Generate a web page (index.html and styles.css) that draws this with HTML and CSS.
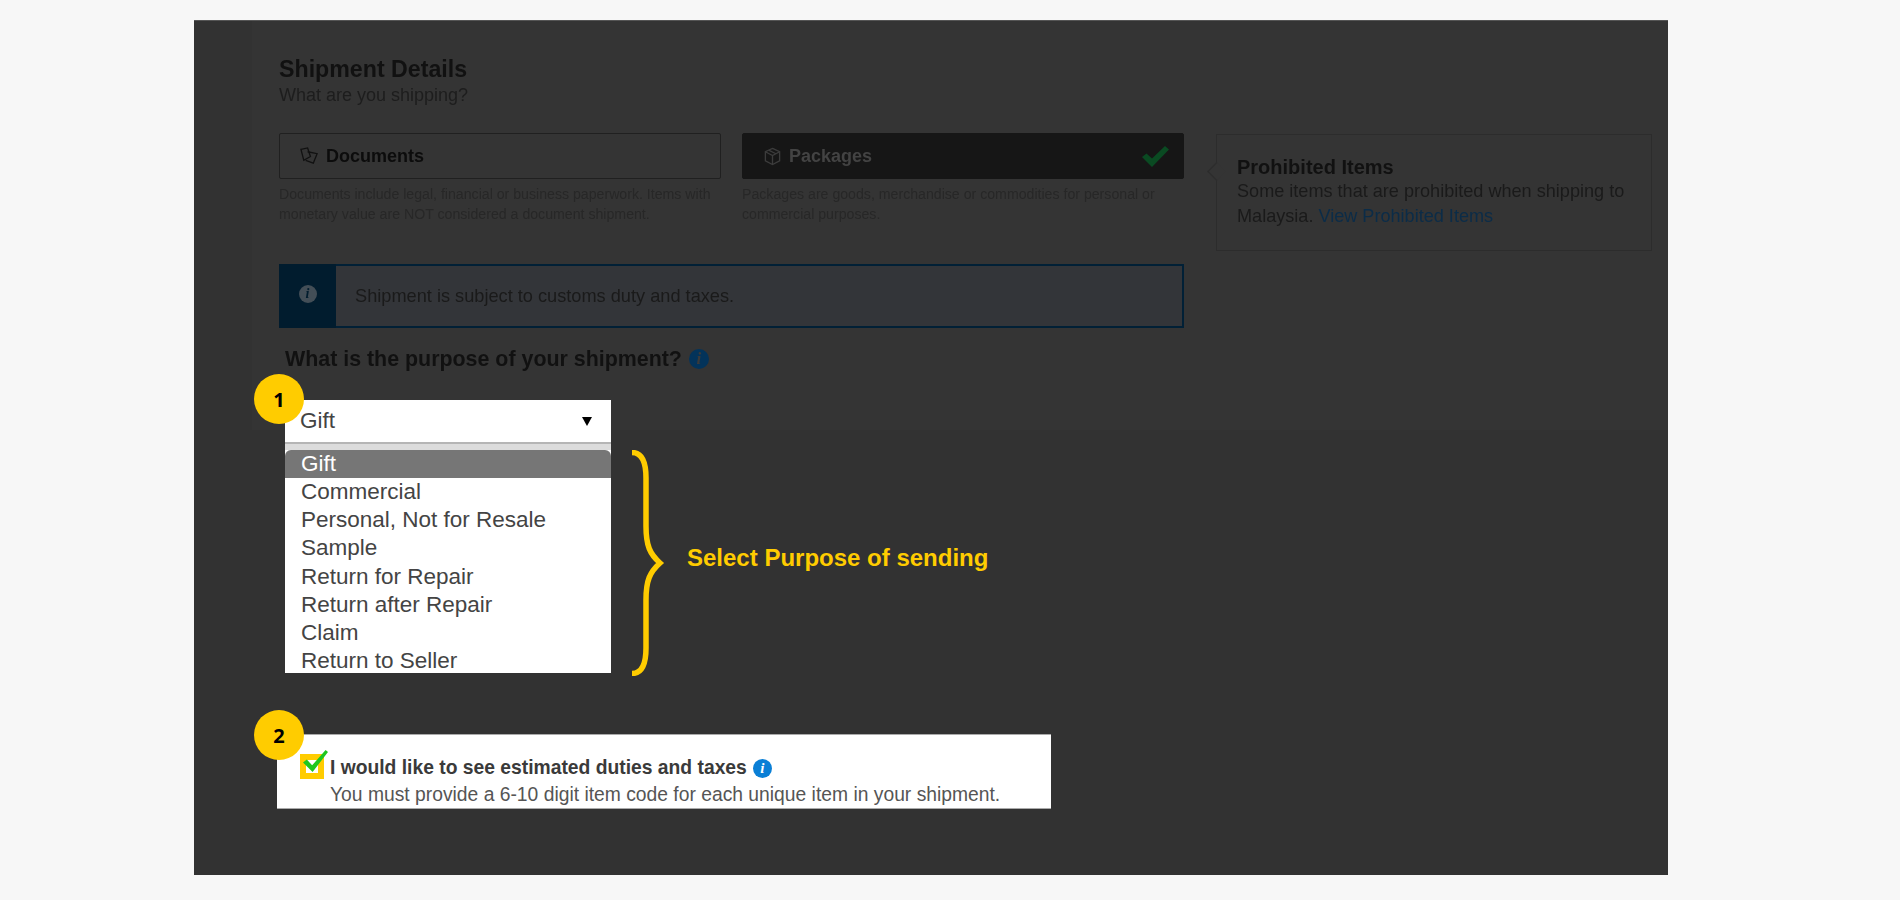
FILE: index.html
```html
<!DOCTYPE html>
<html lang="en">
<head>
<meta charset="utf-8">
<title>Shipment Details</title>
<link rel="stylesheet" href="styles.css">
</head>
<body>
<main class="stage">
  <div class="backdrop">
    <section class="main-col">
      <h1 class="title">Shipment Details</h1>
      <p class="subtitle">What are you shipping?</p>
      <div class="options">
        <div class="option">
          <div class="opt-btn">
            <svg class="opt-icon" viewBox="0 0 20 20" fill="none" stroke="#111" stroke-width="1.4"><path d="M1 2.500 8 1 11 10 4 14Z"/><path d="M8 5 18 7 14 17 6 14"/></svg>
            <span>Documents</span>
          </div>
          <p class="help">Documents include legal, financial or business paperwork. Items with monetary value are NOT considered a document shipment.</p>
        </div>
        <div class="option">
          <div class="opt-btn selected">
            <svg class="opt-icon" viewBox="0 0 20 20" fill="none" stroke="#3c3c3c" stroke-width="1.4"><path d="M10 1.500 17.500 5v9.500L10 18.500 2.500 14.500V5Z"/><path d="M2.500 5 10 9l7.500-4M10 9v9.500M6 3.300l7.500 3.800"/></svg>
            <span>Packages</span>
            <svg class="opt-check" viewBox="0 0 27 21"><path d="M0 11 4.500 7.500 10 12.500 23 0 27 3.500 10 21Z" fill="#0a4a22"/></svg>
          </div>
          <p class="help">Packages are goods, merchandise or commodities for personal or commercial purposes.</p>
        </div>
      </div>
      <div class="banner">
        <div class="banner-side"><span class="info-dim">i</span></div>
        <p class="banner-text">Shipment is subject to customs duty and taxes.</p>
      </div>
      <h2 class="purpose">What is the purpose of your shipment? <span class="info-blue dark">i</span></h2>
    </section>
    <aside class="note">
      <h3 class="note-title">Prohibited Items</h3>
      <p class="note-text">Some items that are prohibited when shipping to Malaysia. <a class="note-link" href="#">View Prohibited Items</a></p>
    </aside>
  </div>

  <div class="select-area">
    <div class="picker">
      <div class="select-box"><span>Gift</span><span class="arrow"></span></div>
      <ul class="list">
        <li class="active">Gift</li>
        <li>Commercial</li>
        <li>Personal, Not for Resale</li>
        <li>Sample</li>
        <li>Return for Repair</li>
        <li>Return after Repair</li>
        <li>Claim</li>
        <li>Return to Seller</li>
      </ul>
      <span class="step step-one">1</span>
    </div>
    <svg class="brace" viewBox="0 0 36 226" fill="none" stroke="#ffcc00" stroke-width="5.500"><path d="M1 2.500C10 2.500 15 10 15 28V76C15 96 19 104 29 113C19 122 15 130 15 150V198C15 216 10 223.500 1 223.500"/></svg>
    <p class="brace-label">Select Purpose of sending</p>
  </div>

  <div class="duties">
    <span class="step step-two">2</span>
    <div class="check-col">
      <span class="check-box"></span>
      <svg class="check-mark" viewBox="0 0 28 26"><path d="M1 14 5 11 10.500 17 24.500 1 27 3 11 24Z" fill="#1ec71e"/></svg>
    </div>
    <div class="duties-copy">
      <p class="duties-title">I would like to see estimated duties and taxes <span class="info-blue">i</span></p>
      <p class="duties-sub">You must provide a 6-10 digit item code for each unique item in your shipment.</p>
    </div>
  </div>
</main>
</body>
</html>
```
FILE: styles.css
```css
* { box-sizing: border-box; }
html, body { margin: 0; height: 900px; overflow: hidden; }
body { background: #f7f7f7; font-family: "Liberation Sans", Arial, sans-serif; }
p, h1, h2, h3, ul { margin: 0; padding: 0; }

.stage {
  position: relative;
  width: 1474px;
  height: 855px;
  margin: 20px 0 0 194px;
  background: #323232;
  border-top: 1px solid #555;
}

.backdrop {
  display: flex;
  gap: 32px;
  height: 409px;
  margin-left: 58px;
  padding: 34px 16px 0 27px;
  background: #343434;
  color: #141414;
  filter: blur(0.35px);
}
.main-col { width: 905px; flex: none; }
.title { font-size: 23.2px; line-height: 28px; font-weight: 700; color: #111; }
.subtitle { margin-top: 1px; font-size: 18px; line-height: 22px; color: #1d1d1d; }

.options { display: flex; gap: 21px; margin-top: 27px; }
.option { width: 442px; flex: none; }
.opt-btn {
  display: flex;
  align-items: center;
  height: 46px;
  padding: 0 14px 0 20px;
  border: 1px solid #202020;
  border-radius: 2px;
  font-size: 18px;
  font-weight: 700;
  color: #0c0c0c;
}
.opt-btn.selected { background: #161616; border-color: #161616; color: #434343; }
.opt-icon { width: 19px; height: 19px; margin-right: 7px; }
.opt-check { width: 27px; height: 21px; margin-left: auto; }
.help { margin-top: 5px; font-size: 14.150px; line-height: 20px; color: #272727; }

.banner {
  display: flex;
  align-items: center;
  height: 64px;
  margin-top: 40px;
  background: #333539;
  border: 2px solid #012036;
  border-left: 0;
}
.banner-side {
  display: flex;
  align-items: center;
  justify-content: center;
  align-self: stretch;
  width: 57px;
  margin: -2px 0;
  padding-bottom: 4px;
  background: #011c2e;
}
.info-dim {
  display: inline-flex;
  align-items: center;
  justify-content: center;
  width: 18px;
  height: 18px;
  border-radius: 50%;
  background: #434e57;
  color: #011c2e;
  font: italic 700 14px "Liberation Serif", serif;
}
.banner-text { margin-left: 19px; font-size: 18.2px; color: #1a1a1a; }

.purpose {
  display: flex;
  align-items: center;
  gap: 7px;
  margin: 18px 0 0 6px;
  font-size: 21.4px;
  line-height: 26px;
  font-weight: 700;
  color: #111;
}
.info-blue {
  display: inline-flex;
  align-items: center;
  justify-content: center;
  width: 19px;
  height: 19px;
  border-radius: 50%;
  background: #0a7fd6;
  color: #fff;
  font: italic 700 15px "Liberation Serif", serif;
}
.info-blue.dark { width: 20px; height: 20px; background: #03335a; color: #3a3a3a; font-size: 17px; }

.note {
  position: relative;
  width: 436px;
  height: 117px;
  margin-top: 79px;
  padding: 20px 16px 0 20px;
  border: 1px solid #2c2c2c;
  font-size: 18.1px;
  color: #1a1a1a;
}
.note::before {
  content: "";
  position: absolute;
  left: -7px;
  top: 30px;
  width: 12px;
  height: 12px;
  background: #343434;
  border-left: 1px solid #2c2c2c;
  border-bottom: 1px solid #2c2c2c;
  transform: rotate(45deg);
}
.note-title { position: relative; font-size: 20px; line-height: 24px; font-weight: 700; color: #111; }
.note-text { position: relative; line-height: 25px; }
.note-link { color: #0b2c48; text-decoration: none; }

.select-area { display: flex; align-items: flex-start; margin: -30px 0 0 91px; }
.picker { position: relative; width: 326px; flex: none; }
.select-box {
  display: flex;
  align-items: center;
  justify-content: space-between;
  height: 44px;
  padding: 0 19px 0 15px;
  background: #fff;
  border-bottom: 2px solid #b5b5b5;
  font-size: 22.500px;
  color: #444;
}
.arrow {
  width: 0;
  height: 0;
  border-left: 5.500px solid transparent;
  border-right: 5.500px solid transparent;
  border-top: 9px solid #000;
}
.list {
  list-style: none;
  height: 229px;
  padding-top: 6px;
  overflow: hidden;
  background: linear-gradient(#dcdcdc 0 6px, #fff 6px);
  font-size: 22.500px;
  line-height: 28.150px;
  color: #444;
}
.list li { padding-left: 16px; }
.list .active { background: #767676; border-radius: 6px 6px 0 0; color: #fff; }

.step {
  position: absolute;
  z-index: 1;
  display: flex;
  align-items: center;
  justify-content: center;
  width: 50px;
  height: 50px;
  border-radius: 50%;
  background: #ffcc00;
  color: #000;
  font: 700 20px "Open Sans", sans-serif;
}
.step-one { left: -31px; top: -26px; }
.step-two { left: -23px; top: -25px; }

.brace { width: 36px; height: 226px; margin: 50px 0 0 20px; flex: none; }
.brace-label { margin: 144px 0 0 20px; font-size: 24px; line-height: 27px; font-weight: 700; color: #ffcc00; }

.duties {
  position: relative;
  display: flex;
  width: 774px;
  height: 75px;
  margin: 58px 0 0 83px;
  padding: 19px 0 0 23px;
  background: #fff;
  border-top: 1px solid #aaa;
  border-bottom: 1px solid #aaa;
  color: #444;
}
.check-col { position: relative; width: 30px; flex: none; }
.check-box { display: block; width: 24px; height: 25px; background: #fff; border: 6px solid #ffcc00; }
.check-mark { position: absolute; left: 2px; top: -5px; width: 27px; height: 25px; }
.duties-copy { padding-top: 2px; }
.duties-title { display: flex; align-items: center; gap: 6px; font-size: 19.300px; line-height: 24px; font-weight: 700; color: #3a3a3a; }
.duties-sub { margin-top: 2px; font-size: 19.300px; line-height: 25px; color: #555; }
```
